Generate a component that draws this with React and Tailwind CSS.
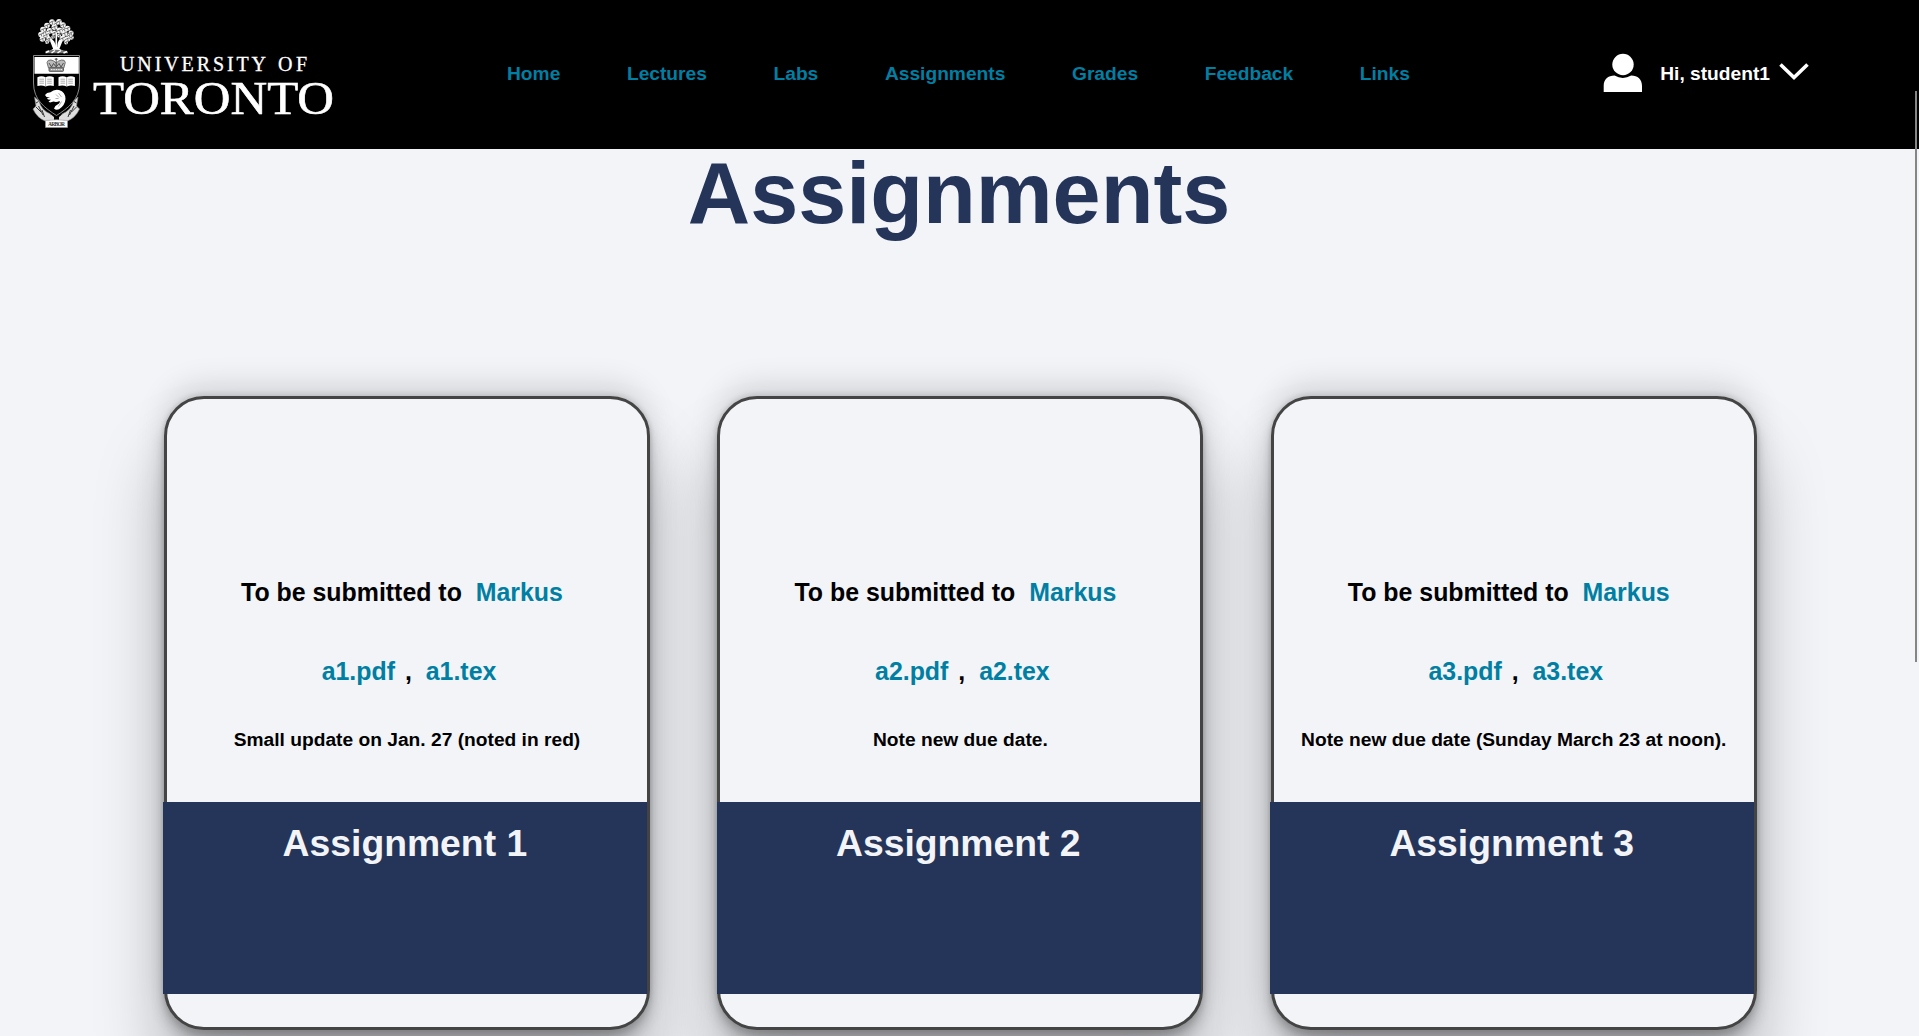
const NAV = ['Home', 'Lectures', 'Labs', 'Assignments', 'Grades', 'Feedback', 'Links'];

const ASSIGNMENTS = [
  { n: 1, note: 'Small update on Jan. 27 (noted in red)' },
  { n: 2, note: 'Note new due date.' },
  { n: 3, note: 'Note new due date (Sunday March 23 at noon).' },
];

// Leaf clusters of the tree above the shield: x, y, radius
const LEAVES = [
  [52, 22, 2.8], [59, 21.8, 2.8], [47, 25.5, 2.8], [54.5, 27, 3], [63, 25, 2.8],
  [43, 29.5, 2.8], [49.5, 31, 3], [59.5, 30.5, 3], [67.5, 28.5, 2.8], [41, 34.5, 2.8],
  [46.5, 35, 2.8], [54.5, 33, 2.6], [64.5, 33.5, 3], [71, 33, 2.6], [42.5, 39, 2.8],
  [49, 39, 2.6], [62.5, 38.5, 2.8], [67.5, 39, 2.8], [71.5, 37.5, 2.2], [47, 42, 2], [66, 42.5, 2],
  [56, 23.5, 2], [59, 35.5, 2], [53, 37, 1.8], [69, 35.5, 1.8], [64, 29.5, 2], [45, 32, 1.8],
];

function Book({ x }) {
  return (
    <g transform={`translate(${x} 76)`}>
      <path d="M0 1.2Q4 -.8 8.2 1.2Q12.4 -.8 16.4 1.2V10Q12.4 8.6 8.2 10.4Q4 8.6 0 10Z" fill="#fff" />
      <path d="M8.2 1.2V10.4M2 3.2H6.6M2 5.2H6.6M2 7.2H6.6M9.8 3.2H14.4M9.8 5.2H14.4M9.8 7.2H14.4" stroke="#777" strokeWidth=".6" />
    </g>
  );
}

function Logo() {
  return (
    <svg width="345" height="140" viewBox="0 0 345 140" fill="none" className="shrink-0">
      {/* tree */}
      <path d="M54 51Q55.500 46 53.500 42L48 36M58.500 51Q57.500 45 59.500 41L65 35M56.300 51V32M50 51.500Q54 50 56 47Q59 50 63 51.500Z" stroke="#fff" strokeWidth="1.700" fill="#fff" />
      {LEAVES.map(([x, y, r], i) => (
        <g key={i}>
          <circle cx={x} cy={y} r={r} fill="#f4f4f4" />
          <path d={`M${x - r} ${y + 1}L${x} ${y - 0.5}L${x + 1} ${y + r}M${x} ${y - 0.5}L${x + r} ${y - 1.5}`} stroke="#333" strokeWidth=".6" />
        </g>
      ))}
      <path d="M45 53.300Q45 50.500 48 50.500Q56 49 64 50.500Q68.500 50.500 68 53.300Z" fill="#777" />
      <path d="M46 52.500L49 51M51.500 53L55 50.500M57.500 53L61 50.500M63.500 53L67 51.500" stroke="#fff" strokeWidth="1.500" />
      {/* ribbons */}
      <path d="M34.500 97L39 101Q41 110 50.500 114L51 120L46 121.500Q37 118 33 109L36 106Z" fill="#ddd" stroke="#888" strokeWidth=".6" />
      <path d="M78 97L73.500 101Q71.500 110 62 114L61.500 120L66.500 121.500Q75.500 118 79.500 109L76.500 106Z" fill="#ddd" stroke="#888" strokeWidth=".6" />
      <path d="M36 103L38.500 101.500M36 107L41 112M38.500 106L43 115M42 110L44.500 117M76.500 103L74 101.500M76.500 107L71.500 112M74 106L69.500 115M70.500 110L68 117" stroke="#222" strokeWidth=".9" />
      {/* shield */}
      <path d="M33.500 55.500H79.500V83C79.500 100 68 108 56.500 115.500C45 108 33.500 100 33.500 83Z" fill="#000" stroke="#888" strokeWidth="1" />
      <path d="M34.500 57H78.800V73.700H34.500Z" fill="#fff" />
      {/* crown */}
      <path d="M48.500 68L47 62.500Q47.500 59.500 51 60Q54 60.500 56.200 63Q58.500 60.500 61.500 60Q65 59.500 65.300 62.500L63.800 68Z" fill="#bbb" stroke="#555" strokeWidth=".8" />
      <path d="M56.200 58V66M54.700 59.200H57.700M49 63L51.500 67L53.500 63.500L56.200 67L59 63.500L61 67L63.500 63" stroke="#444" strokeWidth=".9" />
      <rect x="49" y="67.800" width="14.500" height="3.600" rx=".8" fill="#999" stroke="#444" strokeWidth=".8" />
      <path d="M51 69.600H62" stroke="#fff" strokeWidth=".9" strokeDasharray="1.400 1" />
      <Book x={37.4} />
      <Book x={58.5} />
      {/* beaver */}
      <path d="M45 95Q46.500 92.500 50.500 92.300Q54 89 59 90Q65.500 92 65.500 99Q65 105.500 59 109.300Q56 110.500 54 108.500Q55 105.500 59 103.500Q60.500 101.500 59.500 101Q56.500 102.500 53.500 101.500L50 102.500L48.500 101.500L51 99.700L48 99.500L47 98.300L50 97.500L46.500 97Z" fill="#fff" />
      <path d="M56 94.500L59 97.500M58.500 93L61.500 97M55.500 98.500H58.500M61.500 101.500L58.500 106.500" stroke="#777" strokeWidth=".6" />
      {/* motto */}
      <path d="M47.500 118L51 114.500L54 117V120H47.500ZM65.500 118L62 114.500L59 117V120H65.500Z" fill="#ddd" />
      <path d="M45.500 120.500Q56.500 119 67.500 120.500V127.500H45.500Z" fill="#fff" stroke="#999" strokeWidth=".6" />
      <text x="56.500" y="126.200" textAnchor="middle" fontSize="5.500" fontWeight="700" fill="#333" fontFamily="Liberation Serif, serif" textLength="17">ARBOR</text>
      {/* wordmark */}
      <g fill="#fff" stroke="#fff" fontFamily="Liberation Serif, serif" fontWeight="400">
        <text x="120" y="70.500" fontSize="20" strokeWidth=".3" textLength="146" lengthAdjust="spacing">UNIVERSITY</text>
        <text x="278" y="70.500" fontSize="20" strokeWidth=".3" textLength="29" lengthAdjust="spacing">OF</text>
        <text x="93" y="113.500" fontSize="45.500" strokeWidth=".6" textLength="241" lengthAdjust="spacingAndGlyphs">TORONTO</text>
      </g>
    </svg>
  );
}

function Card({ n, note }) {
  return (
    <article className="flex h-[634px] w-[486px] shrink-0 flex-col rounded-[40px] border-3 border-[#444] bg-[#f2f4f8] text-center text-[24.9px] leading-[29px] [box-shadow:0_54px_68px_rgba(0,0,0,0.27),0_-12px_30px_rgba(0,0,0,0.12),0_4px_6px_rgba(0,0,0,0.12),0_12px_13px_rgba(0,0,0,0.17),0_-3px_5px_rgba(0,0,0,0.09)]">
      <div className="h-[403px] pt-[179px] whitespace-nowrap">
        <p className="pr-2.5">
          To be submitted to <a className="ml-[7px] text-[#007fa3]">Markus</a>
        </p>
        <p className="mt-[50px] pl-1">
          <a className="text-[#007fa3]">a{n}.pdf</a>
          <span className="mr-[7px] ml-[3px]"> , </span>
          <a className="text-[#007fa3]">a{n}.tex</a>
        </p>
        <p className="mt-[43px] text-[19.2px] leading-[22px]">{note}</p>
      </div>
      <h2 className="-ml-[3.6px] h-48 w-[484px] bg-[#25355a] pt-5 pr-px text-[37.3px] leading-[43px] text-[#f2f4f8]">Assignment {n}</h2>
    </article>
  );
}

export default function App() {
  return (
    <div className="relative h-[1036px] w-full overflow-hidden bg-[#f2f4f8] font-['Liberation_Sans',Arial,sans-serif] font-bold text-black">
      <header className="flex h-[149px] items-start bg-black text-[19.2px] leading-[22px]">
        <Logo />
        <nav className="ml-[162px] flex gap-[66.6px] pt-[63px] text-[#007fa3]">
          {NAV.map((item) => (
            <a key={item}>{item}</a>
          ))}
        </nav>
        <div className="mr-[110px] ml-auto flex pt-[53px] text-white">
          <svg width="40" height="40" viewBox="0 0 40 40" fill="#fff">
            <circle cx="20" cy="11.500" r="10.700" />
            <path d="M.7 39V33C.7 26.500 5 22.600 11.500 22.600Q19.800 27.500 28.200 22.600C34.800 22.600 39 26.500 39 33V39Z" />
          </svg>
          <span className="mt-2.5 ml-[17px]">Hi, student1</span>
          <svg width="30" height="20" viewBox="0 0 30 20" fill="none" className="mt-[9px] ml-[9px]">
            <path d="M1.500 2.500L15 15.500L28.500 2.500" stroke="#fff" strokeWidth="3.600" />
          </svg>
        </div>
      </header>
      <h1 className="-mt-1.5 pr-px text-center text-[86.4px] leading-[100px] text-[#25355a]">Assignments</h1>
      <main className="mt-[153px] ml-[164px] flex gap-[67.4px]">
        {ASSIGNMENTS.map((a) => (
          <Card key={a.n} {...a} />
        ))}
      </main>
      <div className="absolute top-[91px] right-[2px] h-[571px] w-[2px] bg-[#858585]" />
    </div>
  );
}
